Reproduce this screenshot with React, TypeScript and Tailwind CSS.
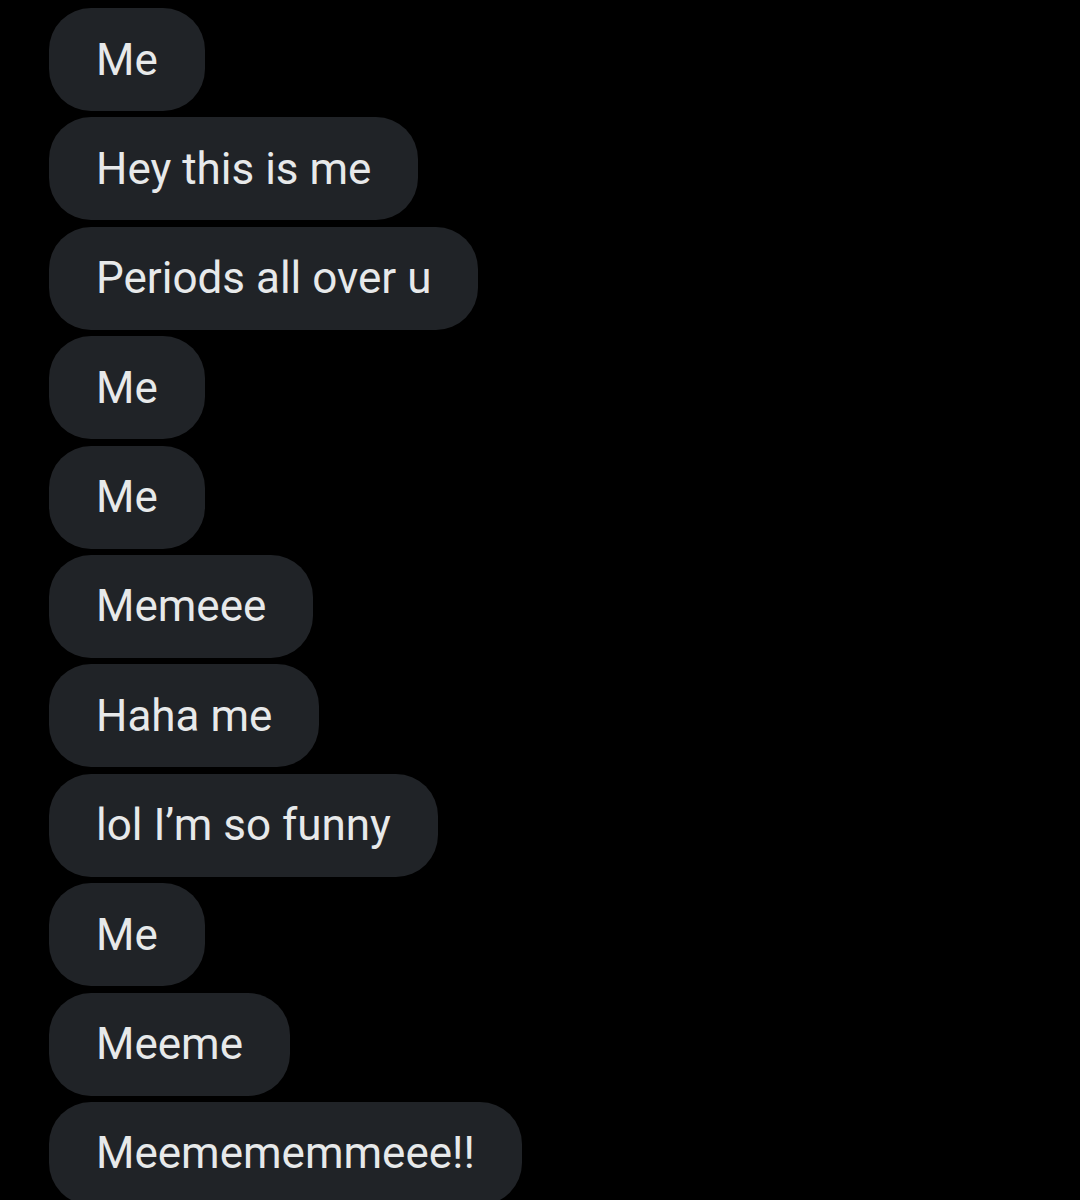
import React from 'react';

const messages = [
  'Me',
  'Hey this is me',
  'Periods all over u',
  'Me',
  'Me',
  'Memeee',
  'Haha me',
  'lol I’m so funny',
  'Me',
  'Meeme',
  'Meemememmeee!!',
];

export default function App() {
  return (
    <div className="w-[1080px] h-[1200px] overflow-hidden bg-black pt-[8px] pl-[49px]">
      <div className="flex flex-col items-start gap-[6.4px]">
        {messages.map((m, i) => (
          <div
            key={i}
            className="h-[103px] flex items-center rounded-[42px] bg-[#202327] px-[47px] text-[44px] text-[#e7e9ea] whitespace-nowrap"
            style={{ fontFamily: 'Roboto, "Noto Sans", sans-serif' }}
          >
            {m}
          </div>
        ))}
      </div>
    </div>
  );
}
